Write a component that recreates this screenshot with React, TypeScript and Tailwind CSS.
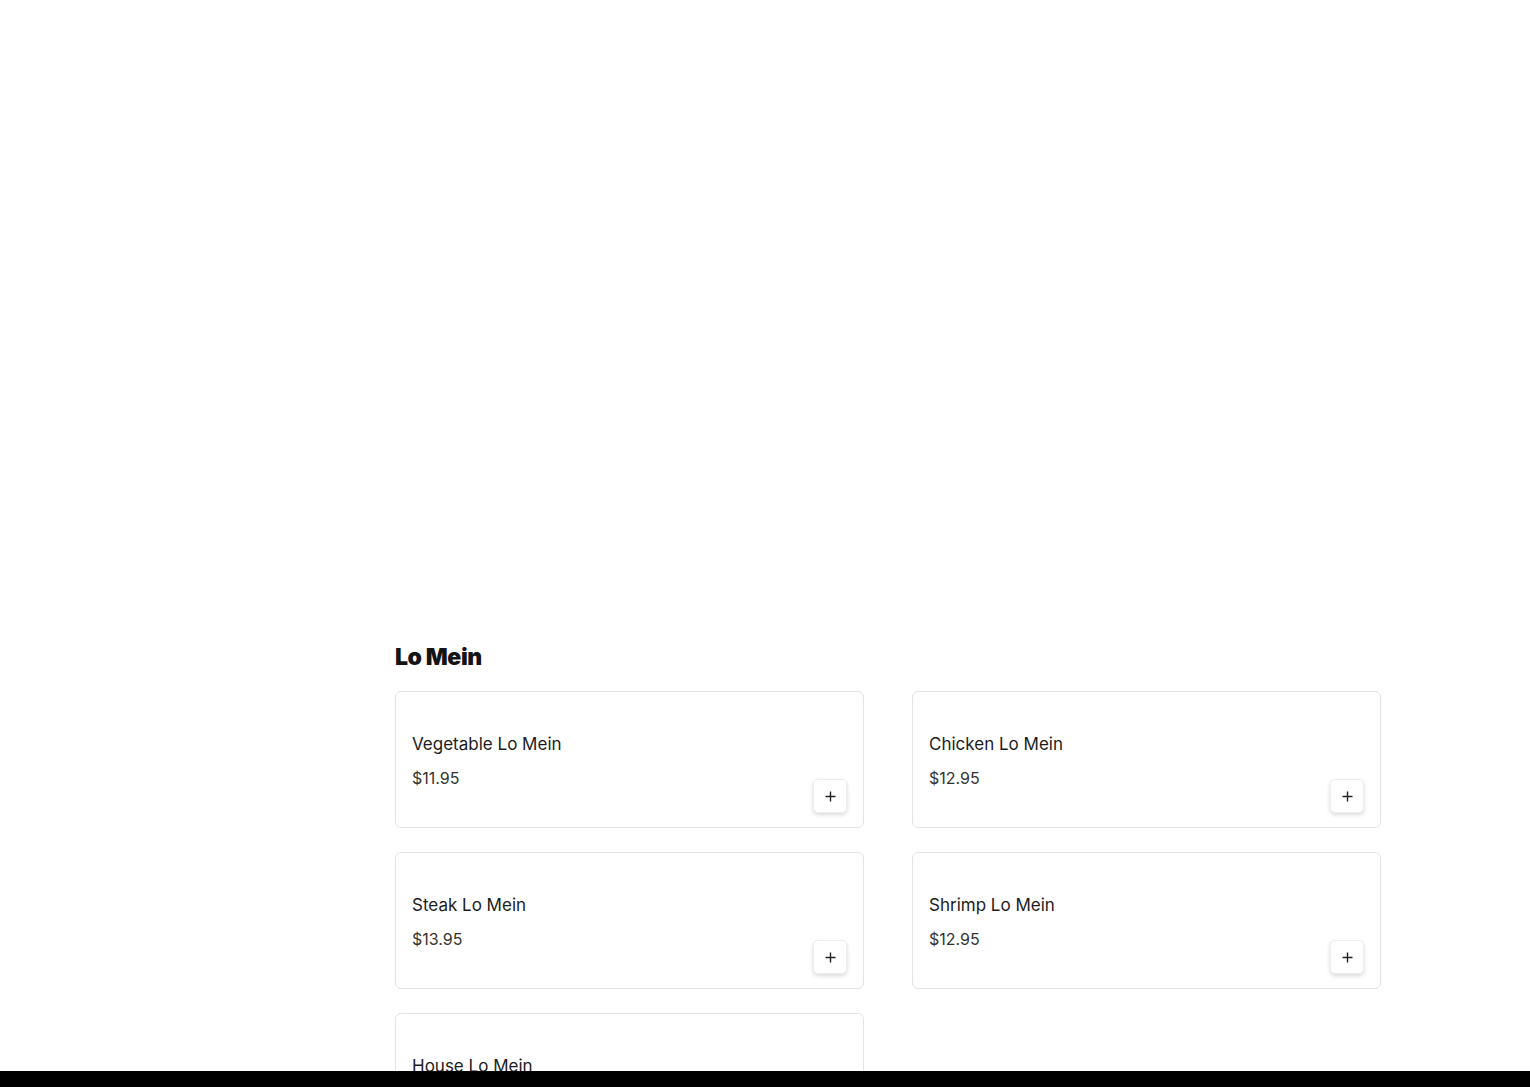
import React from "react";

const items = [
  { name: "Vegetable Lo Mein", price: "$11.95" },
  { name: "Chicken Lo Mein", price: "$12.95" },
  { name: "Steak Lo Mein", price: "$13.95" },
  { name: "Shrimp Lo Mein", price: "$12.95" },
  { name: "House Lo Mein", price: "$12.95" },
];

function Card({ name, price }: { name: string; price: string }) {
  return (
    <div className="relative h-[137px] rounded-[6px] border border-[#e3e3e3] bg-white px-4 pt-[41px]">
      <div className="text-[17px] leading-[22px] text-[#1c1c1c]">{name}</div>
      <div className="mt-[13px] text-[16px] leading-[20px] text-[#333]">{price}</div>
      <button className="absolute bottom-[14px] right-[16px] flex h-[34px] w-[34px] items-center justify-center rounded-[5px] border border-[#eee] bg-white shadow-[0_2px_4px_rgba(0,0,0,0.15)]">
        <svg width="11" height="11" viewBox="0 0 11 11">
          <path d="M5.5 0.5v10M0.5 5.5h10" stroke="#222" strokeWidth="1.4" />
        </svg>
      </button>
    </div>
  );
}

export default function App() {
  return (
    <div className="relative min-h-[1087px] bg-white" style={{ fontFamily: "Inter, 'Open Sans', sans-serif" }}>
      <div className="pl-[395px] pr-[149px] pt-[643px]">
        <h2 className="text-[23px] font-black leading-[28px] tracking-[-0.4px] text-[#141414]">Lo Mein</h2>
        <div className="mt-[20px] grid grid-cols-2 gap-x-[48px] gap-y-[24px]">
          {items.map((it) => (
            <Card key={it.name} {...it} />
          ))}
        </div>
      </div>
      <div className="fixed bottom-0 left-0 right-0 h-[16px] bg-black" />
    </div>
  );
}
